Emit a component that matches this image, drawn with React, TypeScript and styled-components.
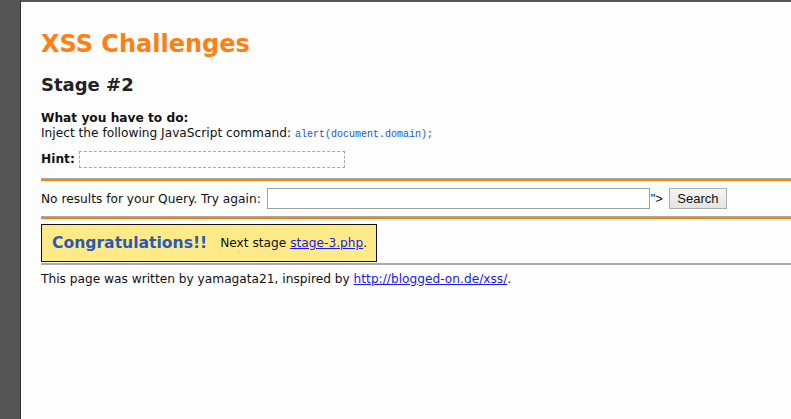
import styled, { createGlobalStyle } from "styled-components";

const GlobalStyle = createGlobalStyle`
  html, body {
    margin: 0;
    padding: 0;
    background: #fdfdfd;
  }
  body {
    font-family: "DejaVu Sans", Verdana, sans-serif;
    font-size: 12.2px;
    color: #111;
  }
`;

const Frame = styled.div`
  display: flex;
  min-height: 419px;
`;

const SideBar = styled.div`
  width: 20px;
  flex-shrink: 0;
  background: #555;
  border-right: 1px solid #333;
`;

const Page = styled.div`
  flex: 1;
  border-top: 2px solid #555;
  padding: 0 0 0 20px;
  overflow: hidden;
`;

const Title = styled.h1`
  margin: 27px 0 0;
  font-size: 24px;
  font-weight: bold;
  color: #ff8010;
  line-height: 30px;
`;

const Stage = styled.h2`
  margin: 14px 0 0;
  font-size: 18px;
  color: #222;
  line-height: 24px;
`;

const Task = styled.div`
  margin-top: 14px;
  line-height: 15px;
`;

const Label = styled.b`
  font-weight: bold;
`;

const Code = styled.code`
  font-family: "Liberation Mono", monospace;
  font-size: 10px;
  color: #2256c8;
`;

const HintRow = styled.div`
  display: flex;
  align-items: center;
  gap: 4px;
  margin-top: 8px;
  height: 18px;
`;

const HintBox = styled.div`
  width: 264px;
  height: 15px;
  border: 1px dashed #aaa;
`;

const Rule = styled.div<{ $top?: number }>`
  margin-top: ${(p) => p.$top ?? 10}px;
  border-top: 1px solid #aaa;
  border-bottom: 2px solid #ff8000;
`;

const SearchForm = styled.form`
  display: flex;
  align-items: center;
  height: 35px;
  margin: 0;
`;

const QueryInput = styled.input`
  width: 379px;
  height: 17px;
  margin: 0 0 0 6px;
  padding: 1px;
  border: 1px solid #a0a0a0;
  font: 13px "Liberation Sans", Arial, sans-serif;
`;

const Tail = styled.span`
  margin: 0 6px 0 1px;
  font: 13px "Liberation Sans", Arial, sans-serif;
`;

const SearchButton = styled.button`
  height: 21px;
  width: 58px;
  padding: 0;
  border: 1px solid #adadad;
  background: linear-gradient(#f6f6f6, #e3e3e3);
  font: 13px "Liberation Sans", Arial, sans-serif;
  color: #111;
`;

const Congrats = styled.div`
  display: inline-flex;
  align-items: center;
  gap: 13px;
  margin-top: 5px;
  height: 36px;
  padding: 0 9px 0 10px;
  background: #ffea88;
  border: 1px solid #111;
`;

const Big = styled.span`
  font-size: 15.6px;
  font-weight: bold;
  color: #2a59b8;
`;

const Line = styled.hr`
  margin: 1px 0 0;
  border: 0;
  border-top: 2px solid #aaa;
`;

const Footer = styled.p`
  margin: 7px 0 0;
  line-height: 15px;
`;

const Link = styled.a`
  color: #1a1aee;
  text-decoration: underline;
`;

export default function App() {
  return (
    <>
      <GlobalStyle />
      <Frame>
        <SideBar />
        <Page>
          <Title>XSS Challenges</Title>
          <Stage>Stage #2</Stage>
          <Task>
            <Label>What you have to do:</Label>
            <br />
            Inject the following JavaScript command:{" "}
            <Code>alert(document.domain);</Code>
          </Task>
          <HintRow>
            <Label>Hint:</Label>
            <HintBox />
          </HintRow>
          <Rule />
          <SearchForm onSubmit={(e) => e.preventDefault()}>
            No results for your Query. Try again:
            <QueryInput type="text" />
            <Tail>"&gt;</Tail>
            <SearchButton type="submit">Search</SearchButton>
          </SearchForm>
          <Rule $top={0} />
          <Congrats>
            <Big>Congratulations!!</Big>
            <span>
              Next stage <Link href="#">stage-3.php</Link>.
            </span>
          </Congrats>
          <Line />
          <Footer>
            This page was written by yamagata21, inspired by{" "}
            <Link href="#">http://blogged-on.de/xss/</Link>.
          </Footer>
        </Page>
      </Frame>
    </>
  );
}
